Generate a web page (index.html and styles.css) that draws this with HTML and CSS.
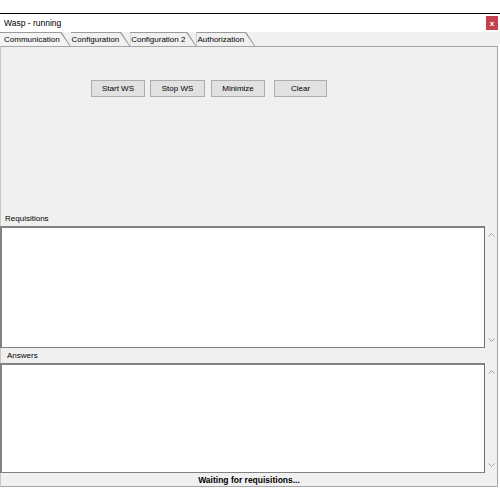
FILE: index.html
```html
<!DOCTYPE html>
<html lang="en">
<head>
  <meta charset="UTF-8">
  <title>Wasp - running</title>
  <link rel="stylesheet" href="styles.css">
</head>
<body>

<div class="window">
  <div class="titlebar">
    <span class="title">Wasp - running</span>
    <span class="close">x</span>
  </div>

  <div class="tabs">
    <div class="tab active"><span>Communication</span></div>
    <div class="tab"><span>Configuration</span></div>
    <div class="tab"><span>Configuration 2</span></div>
    <div class="tab"><span>Authorization</span></div>
  </div>

  <div class="panel">
    <div class="toolbar">
      <button class="btn btn-start">Start WS</button>
      <button class="btn btn-stop">Stop WS</button>
      <button class="btn btn-min">Minimize</button>
      <button class="btn btn-clear">Clear</button>
    </div>

    <div class="label">Requisitions</div>
    <div class="logrow req">
      <div class="logbox"></div>
      <div class="scroll">
        <svg width="7" height="4" viewBox="0 0 7 4"><path d="M0.5 3.5 L3.5 0.5 L6.5 3.5" /></svg>
        <svg width="7" height="4" viewBox="0 0 7 4"><path d="M0.5 0.5 L3.5 3.5 L6.5 0.5" /></svg>
      </div>
    </div>

    <div class="label answers">Answers</div>
    <div class="logrow ans">
      <div class="logbox"></div>
      <div class="scroll">
        <svg width="7" height="4" viewBox="0 0 7 4"><path d="M0.5 3.5 L3.5 0.5 L6.5 3.5" /></svg>
        <svg width="7" height="4" viewBox="0 0 7 4"><path d="M0.5 0.5 L3.5 3.5 L6.5 0.5" /></svg>
      </div>
    </div>

    <div class="status">Waiting for requisitions...</div>
  </div>
</div>

</body>
</html>
```

FILE: styles.css
```css
html, body {
  margin: 0;
  padding: 0;
  background: #fff;
  font-family: "Liberation Sans", Arial, sans-serif;
  font-size: 8px;
  color: #000;
}

.window {
  margin-top: 13px;
  border-top: 1px solid #000;
  width: 500px;
}

.titlebar {
  height: 18px;
  display: flex;
  justify-content: space-between;
  align-items: center;
  background: #fff;
}

.title {
  padding-left: 4px;
  font-size: 8.5px;
}

.close {
  width: 12px;
  height: 14px;
  margin-right: 2px;
  background: #c4414d;
  color: #fff;
  font-size: 8px;
  font-weight: bold;
  display: flex;
  align-items: center;
  justify-content: center;
}

.tabs {
  height: 14px;
  display: flex;
  background: #f0f0f0;
}

.tab {
  height: 14px;
  background: #9a9a9a;
  padding-top: 1px;
  box-sizing: border-box;
  clip-path: polygon(0 0, calc(100% - 9px) 0, 100% 100%, 0 100%);
}

.tab span {
  display: block;
  height: 13px;
  line-height: 13px;
  background: #f0f0f0;
  padding: 0 11px 0 4px;
  clip-path: polygon(0 0, calc(100% - 10px) 0, calc(100% - 1px) 100%, 0 100%);
}

.tab + .tab span {
  padding-left: 1px;
}

.tab.active span {
  background: #f4f4f4;
}

.panel {
  height: 439px;
  border: 1px solid #a6a6a6;
  border-left-color: #c8c8c8;
  margin-right: 2px;
  background: #f0f0f0;
  display: flex;
  flex-direction: column;
}

.toolbar {
  display: flex;
  align-items: flex-start;
  padding: 33px 0 0 90px;
  height: 166px;
  flex-shrink: 0;
  box-sizing: border-box;
}

.btn {
  height: 17px;
  border: 1px solid #adadad;
  background: #e1e1e1;
  font-family: "Liberation Sans", Arial, sans-serif;
  font-size: 8px;
  padding: 0;
  color: #000;
}

.btn-start { width: 54px; margin-right: 5px; }
.btn-stop { width: 55px; margin-right: 6px; }
.btn-min { width: 54px; margin-right: 9px; }
.btn-clear { width: 53px; }

.label {
  height: 12px;
  line-height: 12px;
  padding-left: 4px;
  flex-shrink: 0;
}

.label.answers {
  margin-top: 2px;
  padding-left: 6px;
}

.logrow {
  display: flex;
  margin-top: 1px;
  flex-shrink: 0;
}

.logrow.req { height: 122px; }
.logrow.ans { height: 110px; }

.logbox {
  flex: 1;
  background: #fff;
  border: 1px solid #828282;
  border-top-width: 2px;
  border-left-width: 2px;
  border-right-color: #6e6e6e;
  margin-left: -1px;
}

.scroll {
  width: 12px;
  display: flex;
  flex-direction: column;
  justify-content: space-between;
  align-items: center;
  padding: 7px 0 6px;
  box-sizing: border-box;
}

.scroll path {
  fill: none;
  stroke: #a4a4a4;
  stroke-width: 1;
}

.status {
  height: 13px;
  padding-top: 1px;
  box-sizing: border-box;
  line-height: 12px;
  text-align: center;
  font-weight: bold;
  font-size: 8.5px;
  flex-shrink: 0;
}
```
